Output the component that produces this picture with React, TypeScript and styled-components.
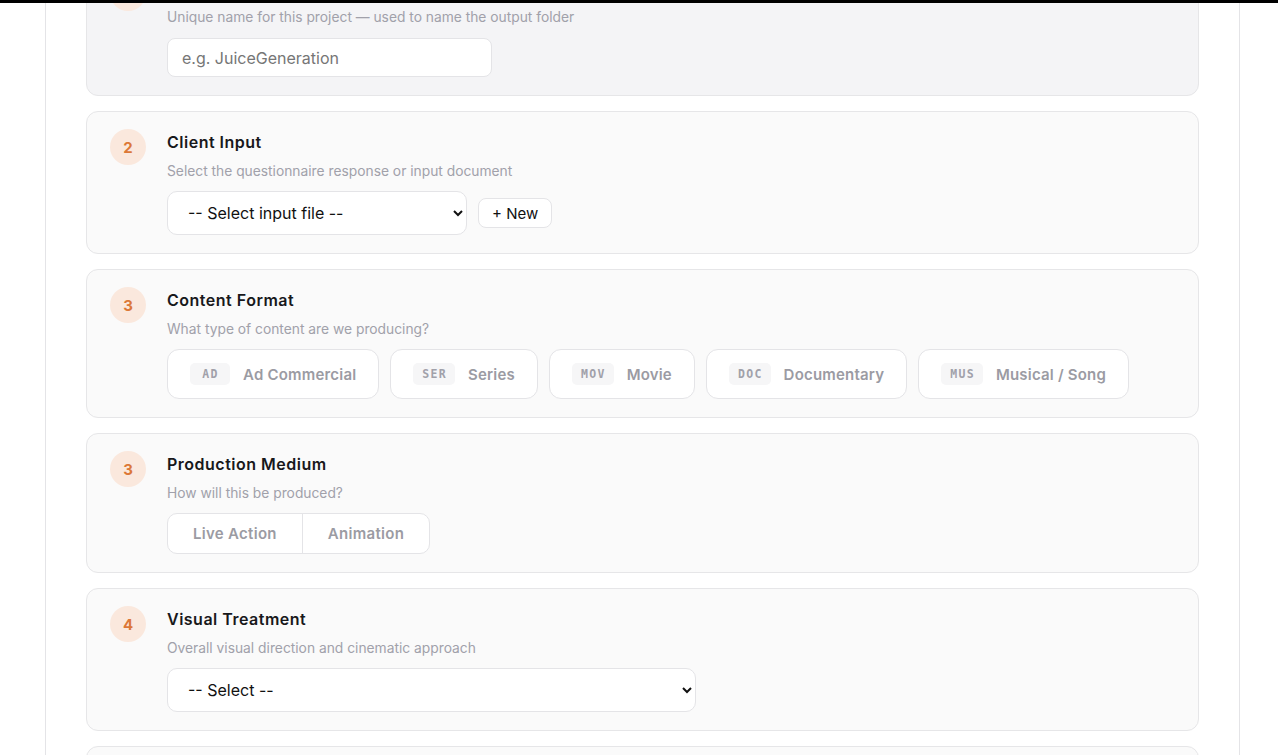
import { useLayoutEffect, useRef } from 'react';
import styled, { createGlobalStyle, css } from 'styled-components';

const GlobalStyle = createGlobalStyle`
    * {
        box-sizing: border-box;
    }

    body {
        margin: 0;
        background: #ffffff;
        font-family: Inter, "Noto Sans", sans-serif;
        color: #18181b;
    }
`;

const TopRule = styled.div`
    position: fixed;
    top: 0;
    left: 0;
    right: 0;
    height: 3px;
    background: #000;
    z-index: 10;
`;

const Viewport = styled.div`
    height: 100vh;
    overflow: hidden;
`;

const Column = styled.main`
    width: 1195px;
    margin-left: 45px;
    border-left: 1px solid #e4e4e7;
    border-right: 1px solid #e4e4e7;
    padding: 24px 40px 40px;
    display: flex;
    flex-direction: column;
    gap: 15px;
`;

const Card = styled.section<{ $active?: boolean }>`
    display: flex;
    gap: 21px;
    padding: 17px 23px 18px;
    border: 1px solid #e6e6e8;
    border-radius: 12px;
    background: #fafafa;

    ${props =>
        props.$active &&
        css`
            background: #f4f4f6;
        `}
`;

const Badge = styled.div`
    flex: none;
    width: 36px;
    height: 36px;
    border-radius: 50%;
    background: #fae8dd;
    color: #dc7838;
    display: flex;
    align-items: center;
    justify-content: center;
    font-size: 15px;
    font-weight: 700;
`;

const Body = styled.div`
    display: flex;
    flex-direction: column;
    min-width: 0;
`;

const Title = styled.h3`
    margin: 1px 0 0;
    font-size: 16px;
    line-height: 24px;
    font-weight: 600;
    letter-spacing: 0.5px;
    color: #18181b;
`;

const Description = styled.p`
    margin: 7px 0 10px;
    font-size: 13.8px;
    line-height: 20px;
    color: #a1a1aa;
`;

const TextInput = styled.input`
    width: 325px;
    height: 39px;
    margin-top: 1px;
    padding: 0 14px;
    border: 1px solid #e4e4e7;
    border-radius: 8px;
    background: #fff;
    font-family: Inter, sans-serif;
    font-size: 16px;
    outline: none;

    &::placeholder {
        color: #767676;
    }
`;

const Row = styled.div`
    display: flex;
    align-items: center;
    gap: 11px;
`;

const Select = styled.select<{ $width: number }>`
    width: ${props => props.$width}px;
    height: 44px;
    padding: 0 16px;
    border: 1px solid #e4e4e7;
    border-radius: 10px;
    background: #fff;
    font-family: Inter, sans-serif;
    font-size: 16px;
    color: #111;
    outline: none;
`;

const GhostButton = styled.button`
    height: 30px;
    padding: 0 13px;
    border: 1px solid #e4e4e7;
    border-radius: 8px;
    background: #fff;
    font-family: Inter, sans-serif;
    font-size: 15px;
    color: #111;
    cursor: pointer;
`;

const Chip = styled.button`
    height: 50px;
    padding: 0 22px;
    display: flex;
    align-items: center;
    gap: 13px;
    border: 1px solid #e4e4e7;
    border-radius: 12px;
    background: #fff;
    cursor: pointer;
`;

const ChipTag = styled.span`
    min-width: 40px;
    height: 22px;
    padding: 0 8px 0 9px;
    display: flex;
    align-items: center;
    justify-content: center;
    border-radius: 5px;
    background: #f6f6f7;
    font-family: "DejaVu Sans Mono", "Liberation Mono", monospace;
    font-size: 11.5px;
    font-weight: 700;
    letter-spacing: 1.3px;
    color: #a1a1aa;
`;

const ChipLabel = styled.span`
    font-family: Inter, sans-serif;
    font-size: 15px;
    font-weight: 600;
    letter-spacing: 0.2px;
    color: #9b9ba3;
`;

const Segmented = styled.div`
    display: inline-flex;
    align-self: flex-start;
    border: 1px solid #e4e4e7;
    border-radius: 10px;
    background: #fff;
    overflow: hidden;
`;

const Segment = styled.button`
    height: 39px;
    padding: 0 25px;
    border: none;
    background: transparent;
    font-family: Inter, sans-serif;
    font-size: 15px;
    font-weight: 600;
    letter-spacing: 0.3px;
    color: #9b9ba3;
    cursor: pointer;

    & + & {
        border-left: 1px solid #e4e4e7;
    }
`;

const formats = [
    { tag: 'AD', label: 'Ad Commercial' },
    { tag: 'SER', label: 'Series' },
    { tag: 'MOV', label: 'Movie' },
    { tag: 'DOC', label: 'Documentary' },
    { tag: 'MUS', label: 'Musical / Song' },
];

interface StepProps {
    num: number;
    title: string;
    description: string;
    active?: boolean;
    children: React.ReactNode;
}

function Step({ num, title, description, active, children }: StepProps) {
    return (
        <Card $active={active}>
            <Badge>{num}</Badge>
            <Body>
                <Title>{title}</Title>
                <Description>{description}</Description>
                {children}
            </Body>
        </Card>
    );
}

export default function App() {
    const viewportRef = useRef<HTMLDivElement>(null);

    // the form is shown scrolled a little past the first step
    useLayoutEffect(() => {
        if (viewportRef.current) viewportRef.current.scrollTop = 67;
    }, []);

    return (
        <>
            <GlobalStyle />
            <TopRule />
            <Viewport ref={viewportRef}>
                <Column>
                    <Step
                        num={1}
                        title="Project Name"
                        description="Unique name for this project — used to name the output folder"
                        active
                    >
                        <TextInput placeholder="e.g. JuiceGeneration" />
                    </Step>

                    <Step
                        num={2}
                        title="Client Input"
                        description="Select the questionnaire response or input document"
                    >
                        <Row>
                            <Select $width={300} defaultValue="">
                                <option value="">-- Select input file --</option>
                            </Select>
                            <GhostButton>+ New</GhostButton>
                        </Row>
                    </Step>

                    <Step num={3} title="Content Format" description="What type of content are we producing?">
                        <Row>
                            {formats.map(f => (
                                <Chip key={f.tag}>
                                    <ChipTag>{f.tag}</ChipTag>
                                    <ChipLabel>{f.label}</ChipLabel>
                                </Chip>
                            ))}
                        </Row>
                    </Step>

                    <Step num={3} title="Production Medium" description="How will this be produced?">
                        <Segmented>
                            <Segment>Live Action</Segment>
                            <Segment>Animation</Segment>
                        </Segmented>
                    </Step>

                    <Step
                        num={4}
                        title="Visual Treatment"
                        description="Overall visual direction and cinematic approach"
                    >
                        <Select $width={529} defaultValue="">
                            <option value="">-- Select --</option>
                        </Select>
                    </Step>

                    <Step num={5} title="Target Audience" description="Who is this content made for?">
                        <Select $width={529} defaultValue="">
                            <option value="">-- Select --</option>
                        </Select>
                    </Step>
                </Column>
            </Viewport>
        </>
    );
}
